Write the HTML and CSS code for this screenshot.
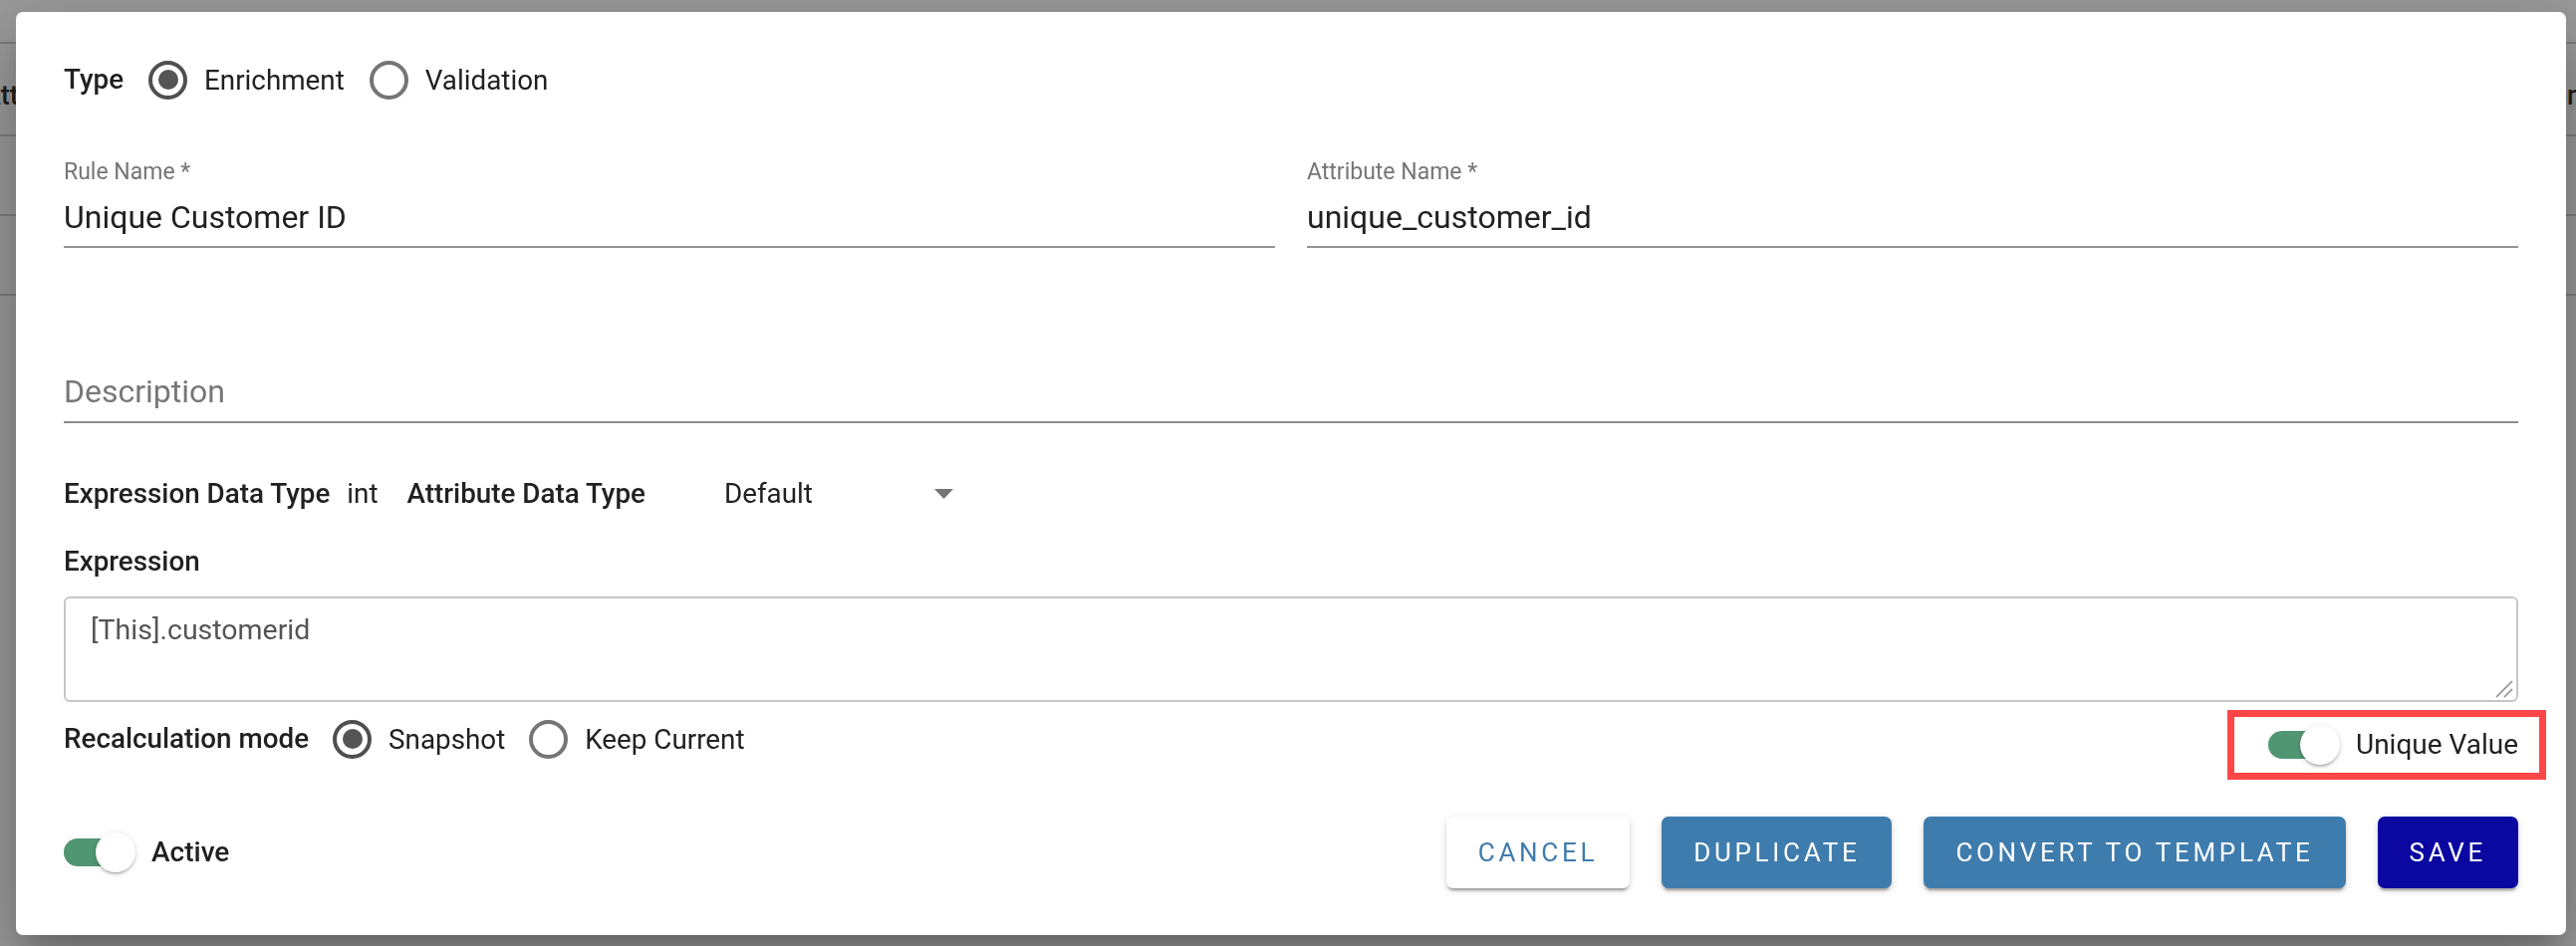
FILE: index.html
```html
<!DOCTYPE html>
<html lang="en">
<head>
<meta charset="utf-8">
<title>Rule editor</title>
<link rel="stylesheet" href="styles.css">
</head>
<body>
<div class="page">
  <div class="page-row pr1"></div>
  <div class="page-row pr2"><span class="cell-left">Attribute Name</span><span class="cell-right">Action</span></div>
  <div class="page-row pr3"></div>
  <div class="page-row pr3"></div>
</div>
<div class="backdrop"></div>
<div class="dialog">
  <div class="row type-row">
    <span class="lbl">Type</span>
    <span class="radio checked"><span class="ring"></span><span>Enrichment</span></span>
    <span class="radio"><span class="ring"></span><span>Validation</span></span>
  </div>
  <div class="fields">
    <div class="field">
      <div class="field-label">Rule Name *</div>
      <div class="field-input">Unique Customer ID</div>
    </div>
    <div class="field">
      <div class="field-label">Attribute Name *</div>
      <div class="field-input">unique_customer_id</div>
    </div>
  </div>
  <div class="desc">Description</div>
  <div class="row dt-row">
    <span class="lbl">Expression Data Type</span>
    <span class="val">int</span>
    <span class="lbl attr-lbl">Attribute Data Type</span>
    <div class="select">
      <span>Default</span>
      <svg class="caret" width="19" height="10" viewBox="0 0 19 10"><polygon points="0,0 19,0 9.5,10" fill="#757575"/></svg>
    </div>
  </div>
  <div class="lbl expr-label">Expression</div>
  <div class="textarea">[This].customerid
    <svg class="grip" width="20" height="20" viewBox="0 0 20 20"><line x1="2" y1="18" x2="18" y2="2" stroke="#8a8a8a" stroke-width="1.6"/><line x1="10" y1="18" x2="18" y2="10" stroke="#8a8a8a" stroke-width="1.6"/></svg>
  </div>
  <div class="row recalc-row">
    <div class="recalc">
      <span class="lbl">Recalculation mode</span>
      <span class="radio checked"><span class="ring"></span><span>Snapshot</span></span>
      <span class="radio"><span class="ring"></span><span>Keep Current</span></span>
    </div>
    <div class="unique">
      <span class="switch"><span class="track"></span><span class="thumb"></span></span>
      <span class="switch-label">Unique Value</span>
    </div>
  </div>
  <div class="row actions-row">
    <div class="active">
      <span class="switch"><span class="track"></span><span class="thumb"></span></span>
      <span class="switch-label bold">Active</span>
    </div>
    <div class="buttons">
      <button class="btn btn-cancel">CANCEL</button>
      <button class="btn btn-blue">DUPLICATE</button>
      <button class="btn btn-blue">CONVERT TO TEMPLATE</button>
      <button class="btn btn-save">SAVE</button>
    </div>
  </div>
</div>
</body>
</html>
```

FILE: styles.css
```css
html, body {
  margin: 0;
  padding: 0;
}
body {
  font-family: Roboto, "Liberation Sans", Arial, sans-serif;
  color: #212121;
  width: 2586px;
  height: 950px;
  overflow: hidden;
  background: #fff;
}

/* page behind the dialog */
.page {
  height: 950px;
  overflow: hidden;
  background: #fff;
}
.page-row {
  border-bottom: 2px solid #cfcfcf;
  display: flex;
  align-items: center;
  justify-content: space-between;
  font-size: 27px;
  font-weight: 500;
  color: #333;
}
.pr1 { height: 42px; }
.pr2 { height: 93px; padding-top: 12px; box-sizing: border-box; }
.pr3 { height: 78px; }
.cell-left { margin-left: -17px; }
.cell-right { margin-right: -6px; }

.backdrop {
  position: fixed;
  inset: 0;
  background: rgba(0, 0, 0, 0.4);
}

/* dialog */
.dialog {
  position: fixed;
  left: 16px;
  top: 12px;
  width: 2560px;
  height: 927px;
  box-sizing: border-box;
  padding: 44px 48px 0;
  background: #fff;
  border-radius: 7px;
  display: flex;
  flex-direction: column;
  box-shadow: 0 18px 25px -11px rgba(0,0,0,.2), 0 40px 63px 5px rgba(0,0,0,.14), 0 15px 76px 13px rgba(0,0,0,.12);
}

.row {
  display: flex;
  align-items: center;
}
.lbl {
  font-size: 27.8px;
  font-weight: 500;
  color: #212121;
  line-height: 32px;
}
.val {
  font-size: 27.8px;
  line-height: 32px;
  color: #212121;
}

.type-row {
  height: 48px;
}
.radio {
  display: flex;
  align-items: center;
  gap: 17px;
  font-size: 27.8px;
  color: #212121;
  margin-left: 25px;
}
.ring {
  width: 39px;
  height: 39px;
  box-sizing: border-box;
  border: 4px solid #757575;
  border-radius: 50%;
  display: flex;
  align-items: center;
  justify-content: center;
}
.radio.checked .ring {
  border-color: #4f4f4f;
}
.radio.checked .ring::after {
  content: "";
  width: 20px;
  height: 20px;
  border-radius: 50%;
  background: #555;
}

.fields {
  margin-top: 56px;
  display: grid;
  grid-template-columns: 1fr 1fr;
  gap: 32px;
}
.field-label {
  font-size: 23px;
  line-height: 26px;
  color: #757575;
}
.field-input {
  padding: 13px 0 10px;
  font-size: 32px;
  line-height: 38px;
  color: #212121;
  border-bottom: 2px solid #949494;
}

.desc {
  margin-top: 125px;
  font-size: 32px;
  line-height: 38px;
  color: #777;
  padding-bottom: 11px;
  border-bottom: 2px solid #8c8c8c;
}

.dt-row {
  margin-top: 55px;
  height: 32px;
}
.dt-row .val {
  margin-left: 17px;
}
.attr-lbl {
  margin-left: 29px;
}
.select {
  margin-left: 79px;
  width: 242px;
  padding-right: 12px;
  box-sizing: border-box;
  display: flex;
  align-items: center;
  justify-content: space-between;
  font-size: 27.8px;
  line-height: 32px;
  color: #212121;
}

.expr-label {
  margin-top: 36px;
}
.textarea {
  position: relative;
  margin-top: 19px;
  height: 106px;
  box-sizing: border-box;
  border: 2px solid #c6c6c6;
  border-radius: 6px;
  padding: 16px 25px;
  font-size: 28.5px;
  line-height: 32px;
  color: #555;
}
.grip {
  position: absolute;
  right: 2px;
  bottom: 1px;
}

.recalc-row {
  margin-top: 13px;
  height: 48px;
  justify-content: space-between;
}
.recalc {
  display: flex;
  align-items: center;
}
.recalc .radio {
  margin-left: 24px;
}
.unique {
  align-self: flex-start;
  margin-top: 2px;
  margin-right: -21px;
  width: 306px;
  height: 56px;
  box-sizing: border-box;
  padding-left: 34px;
  display: flex;
  align-items: center;
  gap: 16px;
  outline: 7px solid #ff4747;
}

.switch {
  position: relative;
  width: 72px;
  height: 40px;
  flex: none;
}
.track {
  position: absolute;
  left: 0;
  top: 6px;
  width: 68px;
  height: 28px;
  border-radius: 14px;
  background: #519672;
}
.thumb {
  position: absolute;
  left: 32px;
  top: 0;
  width: 40px;
  height: 40px;
  border-radius: 50%;
  background: #fff;
  box-shadow: 0 3px 2px -2px rgba(0,0,0,.2), 0 2px 3px 0 rgba(0,0,0,.14), 0 1px 6px 0 rgba(0,0,0,.12);
}
.switch-label {
  font-size: 28px;
  line-height: 34px;
  color: #212121;
}
.switch-label.bold {
  font-weight: 500;
}

.actions-row {
  margin-top: 54px;
  height: 72px;
  justify-content: space-between;
}
.active {
  display: flex;
  align-items: center;
  gap: 16px;
}
.buttons {
  display: flex;
  gap: 32px;
}
.btn {
  height: 72px;
  padding: 0 32px;
  border: none;
  border-radius: 7px;
  font-family: Roboto, "Liberation Sans", Arial, sans-serif;
  font-size: 26px;
  font-weight: 400;
  letter-spacing: 3.7px;
  box-shadow: 0 5px 2px -3px rgba(0,0,0,.2), 0 3px 3px 0 rgba(0,0,0,.14), 0 2px 8px 0 rgba(0,0,0,.12);
}
.btn-cancel {
  background: #fff;
  color: #3f7cae;
}
.btn-blue {
  background: #3f7cae;
  color: #fff;
}
.btn-save {
  background: #0a08a0;
  color: #fff;
}
```
